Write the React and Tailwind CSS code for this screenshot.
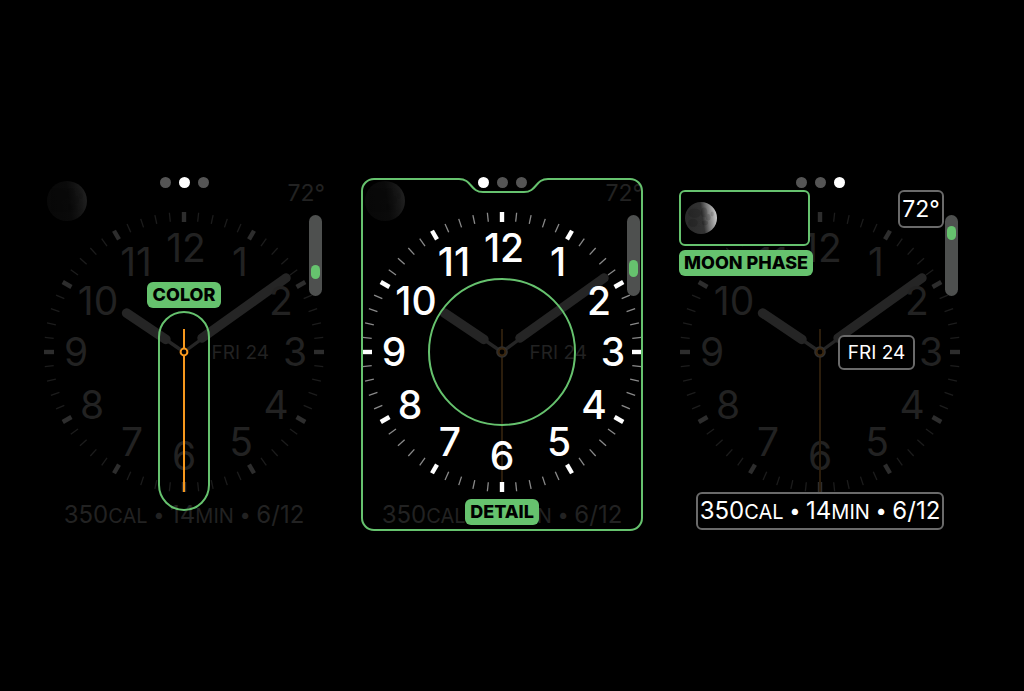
import React from "react";

const NUMERALS = [
  ["12", 2, -104],
  ["1", 56, -90],
  ["2", 97, -51],
  ["3", 111, 0],
  ["4", 92, 53],
  ["5", 57, 90],
  ["6", 0, 104],
  ["7", -52, 90],
  ["8", -92, 53],
  ["9", -108, 0],
  ["10", -86, -51],
  ["11", -48, -90],
];

const MINUTES = Array.from({ length: 60 }, (_, i) => i);

function Dial({ lit = false, activeHand = false }) {
  const major = lit ? "#ffffff" : "#2d2d2d";
  const minor = lit ? "#8a8a8a" : "#1c1c1c";
  const numeral = lit ? "#ffffff" : "#222222";
  const second = activeHand ? "#f7981d" : "#2b1d0c";
  const numerals = (
    <g
      fill={numeral}
      textAnchor="middle"
      className={
        lit
          ? "font-['Inter',sans-serif] text-[39px] font-medium"
          : "font-['Inter',sans-serif] text-[39px] font-normal"
      }
    >
      {NUMERALS.map(([n, x, y]) => (
        <text key={n} x={x} y={y + 14}>
          {n}
        </text>
      ))}
    </g>
  );
  const ticks = MINUTES.map((m) =>
    m % 5 === 0 ? (
      <line key={m} x1="0" y1="-140" x2="0" y2="-130" stroke={major} strokeWidth="4.4" transform={`rotate(${m * 6})`} />
    ) : (
      <line key={m} x1="0" y1="-140" x2="0" y2="-131" stroke={minor} strokeWidth="1.3" transform={`rotate(${m * 6})`} />
    )
  );
  const secondHand = (
    <line x1="0" y1="-23" x2="0" y2="140" stroke={second} strokeWidth="2" />
  );
  return (
    <svg
      viewBox="-141 -141 282 282"
      className="block w-full overflow-visible"
      role="img"
      aria-label="Clock face"
    >
      <g stroke="#252525" strokeLinecap="round">
        <line x1="0" y1="0" x2="-30" y2="-20.5" strokeWidth="3.4" />
        <line x1="-18" y1="-12.5" x2="-57.5" y2="-39" strokeWidth="9.4" />
        <line x1="0" y1="0" x2="30" y2="-22" strokeWidth="3.4" />
        <line x1="18" y1="-14" x2="102" y2="-74" strokeWidth="9.4" />
      </g>
      {lit && secondHand}
      {ticks}
      {numerals}
      {!lit && secondHand}
      {!activeHand && <circle r="5.8" fill="#303030" />}
      <circle r="3.4" fill="#000000" stroke={activeHand ? second : "#3a2710"} strokeWidth="2" />
    </svg>
  );
}

function Moon({ id, bright = false }) {
  return (
    <svg
      viewBox="-20 -20 40 40"
      className={bright ? "block size-8" : "block size-10"}
      role="img"
      aria-label="Moon"
    >
      <defs>
        <linearGradient id={`${id}-lit`} x1="0" x2="1" y1="0.6" y2="0.45">
          <stop offset="0" stopColor={bright ? "#2a2a2a" : "#080808"} />
          <stop offset="0.55" stopColor={bright ? "#323232" : "#0a0a0a"} />
          <stop offset="0.72" stopColor={bright ? "#747474" : "#111111"} />
          <stop offset="1" stopColor={bright ? "#cccccc" : "#202020"} />
        </linearGradient>
        <clipPath id={`${id}-disc`}>
          <circle r="20" />
        </clipPath>
      </defs>
      <circle r="20" fill={`url(#${id}-lit)`} />
      <g clipPath={`url(#${id}-disc)`} fill="#000000" opacity={bright ? "0.14" : "0.1"}>
        <ellipse cx="-8" cy="-6" rx="8" ry="6" />
        <ellipse cx="-10" cy="6" rx="6" ry="5" />
        <ellipse cx="4" cy="-7" rx="4" ry="6" />
        <ellipse cx="9" cy="-1" rx="3" ry="4" />
        <ellipse cx="5" cy="6" rx="4" ry="3" />
        <ellipse cx="14" cy="-5" rx="2" ry="3" />
      </g>
    </svg>
  );
}

function PageDots({ active }) {
  return (
    <div
      className="z-10 col-start-1 row-start-1 flex h-[9px] items-center gap-2 justify-self-center"
      aria-label={`Page ${active + 1} of 3`}
    >
      {[0, 1, 2].map((i) => (
        <span
          key={i}
          className={
            i === active
              ? "size-[11px] rounded-full bg-white"
              : "size-[11px] rounded-full bg-[#555555]"
          }
        />
      ))}
    </div>
  );
}

function CrownIndicator({ className }) {
  return (
    <div className="col-start-1 row-start-1 mt-[37px] mr-[3px] flex h-[81px] w-[13px] flex-col items-center justify-self-end rounded-full bg-[#4e504f]">
      <div className={`w-[9px] rounded-full bg-[#66c26e] ${className}`} />
    </div>
  );
}

function Activity() {
  return (
    <div className="text-[24px] leading-[34px] whitespace-pre">
      350<span className="text-[20px] leading-none">CAL • </span>14
      <span className="text-[20px] leading-none">MIN • </span>6/12
    </div>
  );
}

function Tag({ className = "", children }) {
  return (
    <span
      className={`rounded-md bg-[#66c26e] px-[5px] text-center text-[18px] leading-[26px] font-extrabold whitespace-nowrap text-black ${className}`}
    >
      {children}
    </span>
  );
}

function Boxed({ className = "", children }) {
  return (
    <div className={`rounded-md border-2 border-[#6a6a6a] bg-black text-center ${className}`}>
      {children}
    </div>
  );
}

function DimComplications({ id }) {
  return (
    <div className="col-start-1 row-start-1 flex flex-col text-[#222222]">
      <div className="flex h-[159px] items-start justify-between pt-[3px] pl-1">
        <Moon id={id} />
        <span className="text-[23px] leading-6">72°</span>
      </div>
      <div className="flex justify-end pr-14 text-[19px] leading-[31px]">FRI 24</div>
      <div className="mt-auto -mb-0.5 flex justify-center">
        <Activity />
      </div>
    </div>
  );
}

function ActiveComplications({ id }) {
  return (
    <div className="col-start-1 row-start-1 flex flex-col pt-3">
      <div className="flex h-[145px] items-start justify-between pr-[17px]">
        <div className="flex flex-col items-start gap-1">
          <div className="flex h-14 w-[131px] items-center rounded-md border-2 border-[#66c26e] bg-black pl-1">
            <Moon id={id} bright />
          </div>
          <Tag className="w-[134px]">MOON PHASE</Tag>
        </div>
        <Boxed className="h-[38px] w-[46px] text-[23px] leading-[35px]">72°</Boxed>
      </div>
      <div className="flex justify-end pr-[46px]">
        <Boxed className="w-[77px] text-[19px] leading-[31px]">FRI 24</Boxed>
      </div>
      <div className="mt-auto flex justify-center">
        <Boxed className="w-[248px]">
          <Activity />
        </Boxed>
      </div>
    </div>
  );
}

function Screen({ page, thumb, lit, activeHand, complications, children }) {
  return (
    <section className="grid w-[282px] shrink-0">
      <div className="col-start-1 row-start-1 pt-[33px] pb-[37px]">
        <Dial lit={lit} activeHand={activeHand} />
      </div>
      {complications}
      <CrownIndicator className={thumb} />
      {children}
      <PageDots active={page} />
    </section>
  );
}

export default function App() {
  return (
    <main className="flex min-h-screen items-center justify-center gap-9 bg-black pt-[17px] pr-5 font-['Inter',sans-serif] text-white">
      <Screen
        page={1}
        activeHand
        thumb="mt-[50px] h-[14px]"
        complications={<DimComplications id="color-moon" />}
      >
        <div className="col-start-1 row-start-1 flex flex-col items-center gap-[3px] self-start pt-[104px]">
          <Tag className="w-[74px]">COLOR</Tag>
          <div className="h-[200px] w-[52px] rounded-full border-2 border-[#66c26e]" />
        </div>
      </Screen>

      <Screen
        page={0}
        lit
        thumb="mt-[45px] h-[17px]"
        complications={<DimComplications id="detail-moon" />}
      >
        <svg
          viewBox="0 0 282 352"
          className="col-start-1 row-start-1 block w-full overflow-visible"
          aria-hidden="true"
        >
          <path
            d="M13 1 H98 C111 1 109 14 122 14 H163 C176 14 174 1 187 1 H269 A12 12 0 0 1 281 13 V340 A12 12 0 0 1 269 352 H13 A12 12 0 0 1 1 340 V13 A12 12 0 0 1 13 1 Z"
            fill="none"
            stroke="#66c26e"
            strokeWidth="2"
          />
          <circle cx="141" cy="174" r="73" fill="none" stroke="#66c26e" strokeWidth="2" />
        </svg>
        <Tag className="col-start-1 row-start-1 mb-[5px] w-[74px] self-end justify-self-center">DETAIL</Tag>
      </Screen>

      <Screen
        page={2}
        thumb="mt-[11px] h-[14px]"
        complications={<ActiveComplications id="phase-moon" />}
      />
    </main>
  );
}
